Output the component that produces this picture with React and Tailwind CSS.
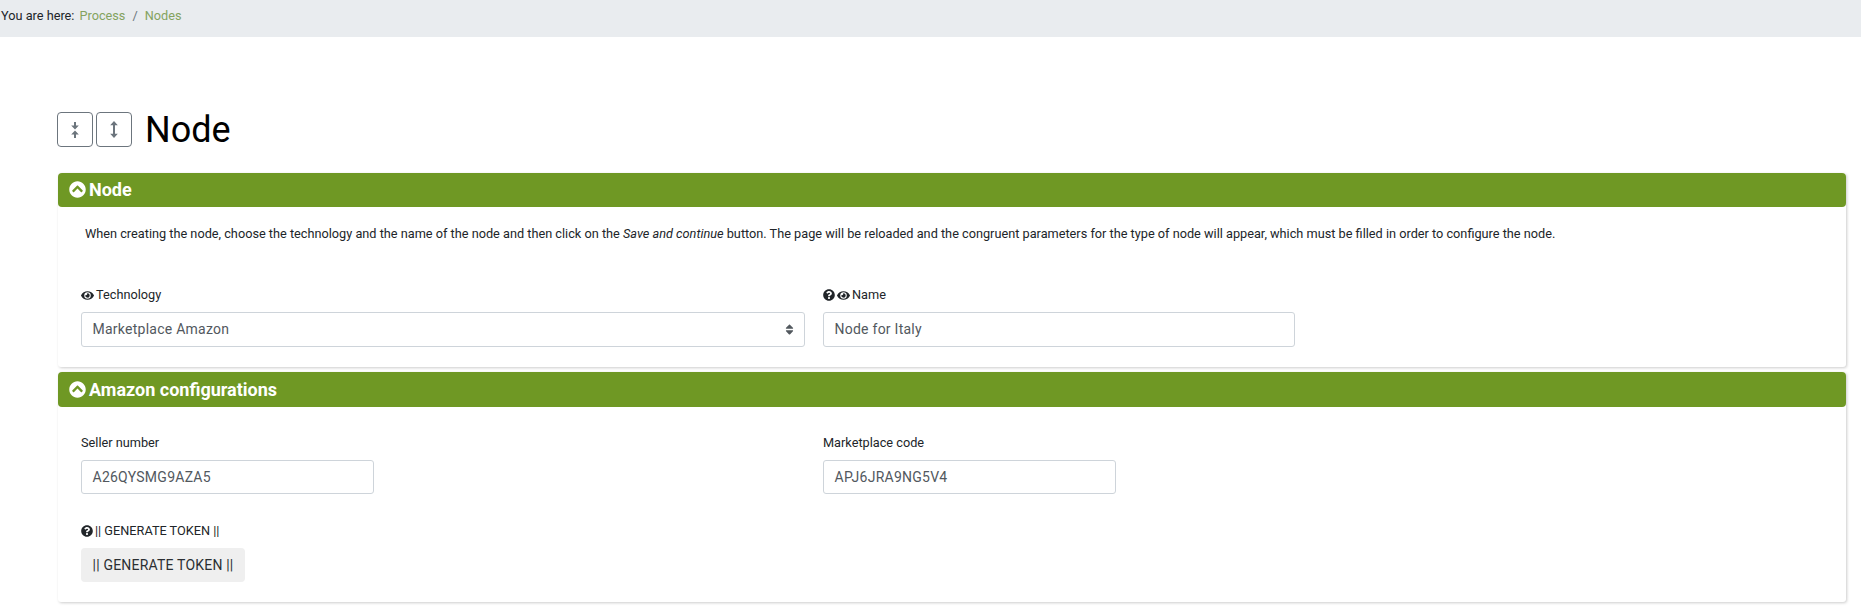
import React from 'react'
import { FaChevronCircleUp, FaEye, FaQuestionCircle, FaSort } from 'react-icons/fa'

const inputCls = "flex items-center px-[10.5px] border border-[#ced4da] rounded-[3px] bg-white text-[14px] tracking-[0.25px] text-[#52585e]"

const Panel = ({ title, children, bodyCls, headCls }) => (
  <div className="ml-[1px] rounded-[3px] bg-white shadow-[1px_1px_3px_rgba(0,0,0,0.2)]">
    <div className={`${headCls} flex items-center gap-[3px] pl-[11px] bg-[#6f9824] rounded-[4px] text-white font-bold text-[18px]`}>
      <FaChevronCircleUp className="text-[17px]" />
      <span>{title}</span>
    </div>
    <div className={bodyCls}>{children}</div>
  </div>
)

const Label = ({ help, eye, children }) => (
  <div className="h-[16px] flex items-center gap-[2px] text-[12.73px] leading-none text-[#212529]">
    {help && <FaQuestionCircle className="text-[12px]" />}
    {eye && <FaEye className="text-[13px]" />}
    <span>{children}</span>
  </div>
)

const App = () => {
  return (
    <div className="min-h-[606px] bg-white font-['Roboto',sans-serif] text-[#212529]">
      <div className="h-[37px] bg-[#e9ecef] flex items-start pt-[8px] text-[12.73px] leading-[16px]">
        <span className="pl-[1px]">You are here:</span>
        <span className="ml-[5px] text-[#84a35f]">Process</span>
        <span className="mx-[7px] text-[#6c757d]">/</span>
        <span className="text-[#84a35f]">Nodes</span>
      </div>

      <div className="pl-[57px] pr-[15px]">
        <div className="pt-[75px] flex items-center h-[110px]">
          <button className="w-[36px] h-[35px] flex items-center justify-center border border-[#6c757d] rounded-[4px]">
            <svg width="8" height="16" viewBox="0 0 8 16" fill="#6c757d">
              <rect x="3" y="0" width="2" height="4" />
              <rect x="3" y="12" width="2" height="4" />
              <path d="M.2 3.4h7.6L4 7.5zM.2 12.6h7.6L4 8.5z" />
            </svg>
          </button>
          <button className="ml-[3px] w-[36px] h-[35px] flex items-center justify-center border border-[#6c757d] rounded-[4px]">
            <svg width="8" height="17" viewBox="0 0 8 17" fill="#6c757d">
              <rect x="3" y="3" width="2" height="11" />
              <path d="M.2 4.2L4 0l3.8 4.2zM.2 12.8L4 17l3.8-4.2z" />
            </svg>
          </button>
          <h1 className="ml-[13px] text-[36px] leading-none font-[450] text-black">Node</h1>
        </div>

        <div className="mt-[26px] flex flex-col gap-[5px]">
          <Panel title="Node" headCls="h-[34px] pb-[1px]" bodyCls="h-[160px] pt-[19px]">
            <p className="pl-[27px] text-[12.73px] leading-[16px]">
              When creating the node, choose the technology and the name of the node and then click on the <em>Save and continue</em> button. The page will be reloaded and the congruent parameters for the type of node will appear, which must be filled in order to configure the node.
            </p>
            <div className="mt-[45px] pl-[23px] grid grid-cols-[742px_472px]">
              <div>
                <Label eye>Technology</Label>
                <div className={`${inputCls} h-[35px] mt-[9px] w-[724px] justify-between pr-[8px]`}>
                  <span>Marketplace Amazon</span>
                  <FaSort className="text-[13px]" />
                </div>
              </div>
              <div>
                <Label help eye>Name</Label>
                <div className={`${inputCls} h-[35px] mt-[9px]`}>Node for Italy</div>
              </div>
            </div>
          </Panel>

          <Panel title="Amazon configurations" headCls="h-[35px] pb-[1px]" bodyCls="h-[195px] pt-[28px] pl-[23px]">
            <div className="grid grid-cols-[742px_293px]">
              <div>
                <Label>Seller number</Label>
                <div className={`${inputCls} h-[34px] mt-[9px] w-[293px]`}>A26QYSMG9AZA5</div>
              </div>
              <div>
                <Label>Marketplace code</Label>
                <div className={`${inputCls} h-[34px] mt-[9px]`}>APJ6JRA9NG5V4</div>
              </div>
            </div>
            <div className="mt-[29px]">
              <Label help>|| GENERATE TOKEN ||</Label>
              <button className="mt-[9px] h-[34px] w-[164px] rounded-[4px] bg-[#efefef] text-[14px] tracking-[0.2px] text-[#2b2f33]">|| GENERATE TOKEN ||</button>
            </div>
          </Panel>
        </div>
      </div>
    </div>
  )
}

export default App
